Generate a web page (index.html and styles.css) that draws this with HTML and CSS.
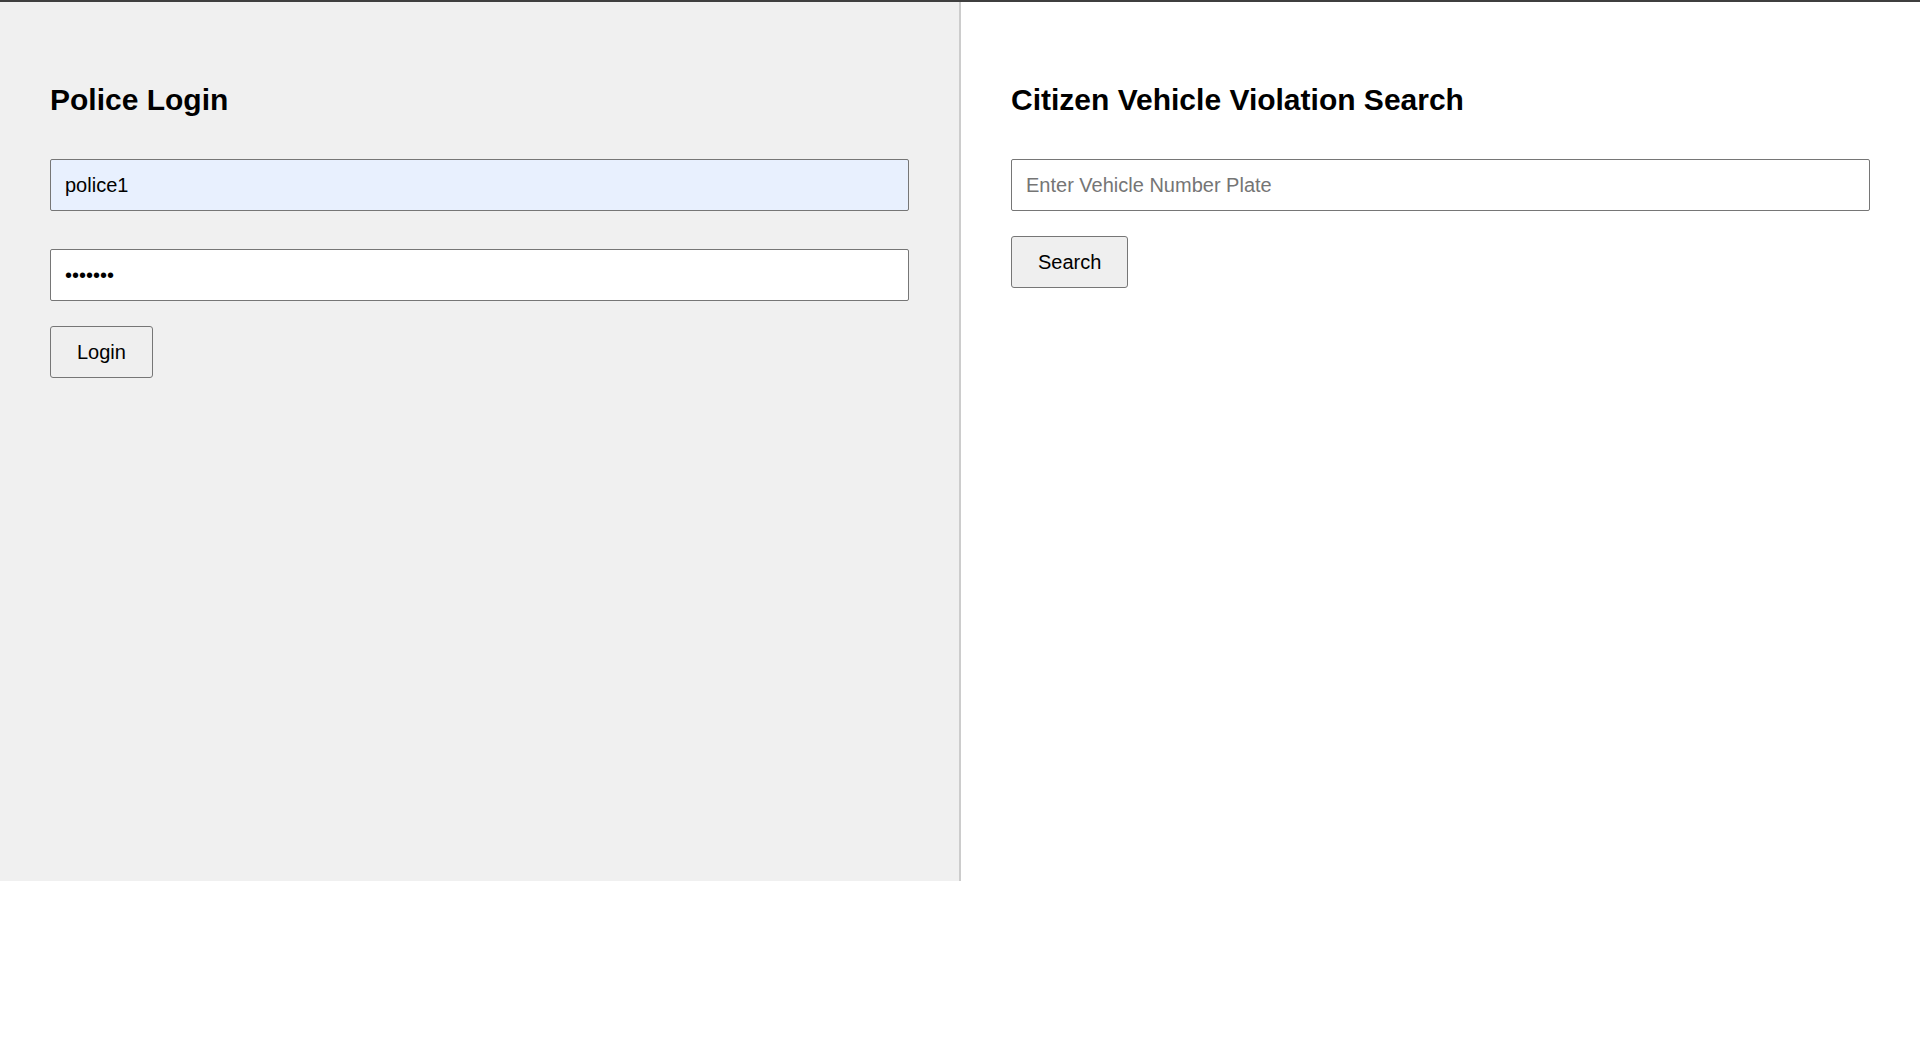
FILE: index.html
```html
<!DOCTYPE html>
<html lang="en">
<head>
<meta charset="utf-8">
<title>Traffic Violation Portal</title>
<link rel="stylesheet" href="styles.css">
</head>
<body>
<div class="page">
  <section class="panel panel-police">
    <h2 class="title">Police Login</h2>
    <input class="field field-filled field-gap-lg" type="text" value="police1">
    <input class="field field-gap" type="password" value="1234567">
    <button class="btn" type="button">Login</button>
  </section>
  <section class="panel panel-citizen">
    <h2 class="title">Citizen Vehicle Violation Search</h2>
    <input class="field field-gap" type="text" placeholder="Enter Vehicle Number Plate">
    <button class="btn" type="button">Search</button>
  </section>
</div>
</body>
</html>
```

FILE: styles.css
```css
html, body {
  margin: 0;
  padding: 0;
  background: #ffffff;
}

body {
  font-family: "Liberation Sans", Arial, sans-serif;
  color: #000;
}

.page {
  display: flex;
  border-top: 2px solid #3f3f3f;
  height: 879px;
}

.panel {
  flex: 1 1 0;
  padding: 50px;
  display: flex;
  flex-direction: column;
  align-items: flex-start;
}

.panel-police {
  background: #f0f0f0;
  border-right: 2px solid #cccccc;
}

.panel-citizen {
  background: #ffffff;
}

.title {
  font-size: 30px;
  line-height: 35px;
  font-weight: bold;
  margin: 30px 0 42px 0;
}

.field {
  box-sizing: border-box;
  width: 100%;
  height: 52px;
  padding: 0 14px;
  margin: 0;
  border: 1px solid #767676;
  border-radius: 2px;
  background: #ffffff;
  font-family: "Liberation Sans", Arial, sans-serif;
  font-size: 20px;
  color: #000;
  outline: none;
}

.field::placeholder {
  color: #757575;
}

.field-filled {
  background: #e8f0fe;
}

.field-gap-lg {
  margin-bottom: 38px;
}

.field-gap {
  margin-bottom: 25px;
}

.btn {
  box-sizing: border-box;
  height: 52px;
  padding: 0 26px;
  border: 1px solid #767676;
  border-radius: 3px;
  background: #efefef;
  font-family: "Liberation Sans", Arial, sans-serif;
  font-size: 20px;
  color: #000;
}
```
